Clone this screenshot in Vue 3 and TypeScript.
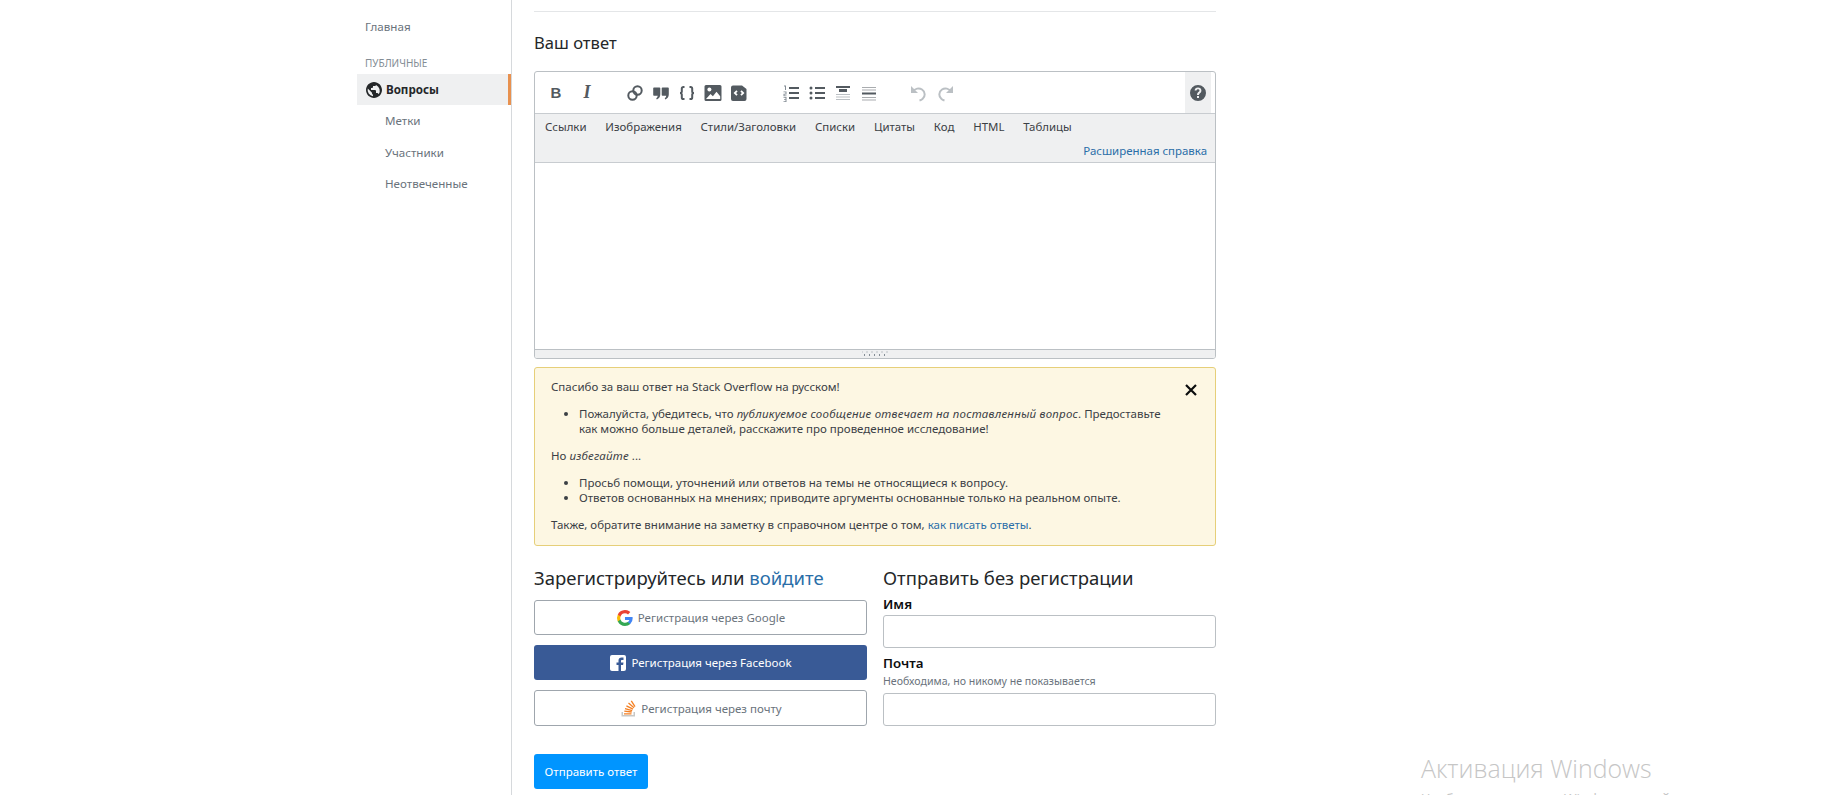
<script setup lang="ts">
const tabs: string[] = ['Ссылки', 'Изображения', 'Стили/Заголовки', 'Списки', 'Цитаты', 'Код', 'HTML', 'Таблицы']
const navItems: string[] = ['Метки', 'Участники', 'Неотвеченные']
</script>

<template>
  <div class="page">
    <aside class="sidebar">
      <div class="home">Главная</div>
      <div class="section">ПУБЛИЧНЫЕ</div>
      <div class="active">
        <svg class="globe" width="18" height="18" viewBox="0 0 18 18"><path fill="#242729" d="M9 1C4.64 1 1 4.64 1 9c0 4.36 3.64 8 8 8 4.36 0 8-3.64 8-8 0-4.36-3.64-8-8-8ZM8 15.32a6.46 6.46 0 0 1-4.3-2.74 6.46 6.46 0 0 1-.93-5.01L7 11.68v.8c0 .44.56 1.13 1 1.22v1.62Zm5.72-2c-.2-.66-1-1.32-1.72-1.32h-1v-2c0-.44-.56-1-1-1H6V7h1c.44 0 1-.56 1-1V5h2c.55 0 .95-.34 1-.9v-.16a6.49 6.49 0 0 1 2.72 9.38Z"/></svg>
        <span>Вопросы</span>
      </div>
      <div v-for="item in navItems" :key="item" class="nav-item">{{ item }}</div>
    </aside>

    <main class="main">
      <hr class="rule" />
      <h2 class="answer-title">Ваш ответ</h2>

      <div class="editor">
        <div class="toolbar">
          <div class="group">
            <span class="tool tool-b">B</span>
            <span class="tool tool-i">I</span>
          </div>
          <div class="group g2">
            <span class="tool">
              <svg width="18" height="18" viewBox="0 0 18 18" fill="none" stroke="#535a60" stroke-width="2"><circle cx="6.500" cy="11.500" r="4.200"/><circle cx="11.500" cy="6.500" r="4.200"/></svg>
            </span>
            <span class="tool">
              <svg width="18" height="18" viewBox="0 0 18 18" fill="#535a60"><path d="M2 3.500h5.500c.5 0 .8.300.8.800v6c0 2.500-1.200 4.200-3.400 5.200l-.7-1.100c.9-.6 1.400-1.400 1.500-2.600H2c-.5 0-.8-.3-.8-.8V4.300c0-.5.300-.8.800-.8zM10.500 3.500H16c.5 0 .8.300.8.800v6c0 2.500-1.200 4.200-3.400 5.200l-.7-1.100c.9-.6 1.400-1.400 1.500-2.600h-3.700c-.5 0-.8-.3-.8-.8V4.300c0-.5.300-.8.800-.8z"/></svg>
            </span>
            <span class="tool">
              <svg width="18" height="18" viewBox="0 0 18 18" fill="none" stroke="#535a60" stroke-width="2"><path d="M6.500 3H5.500C4.300 3 3.800 3.600 3.800 4.600v2.900c0 .9-.6 1.500-1.800 1.500 1.200 0 1.800.6 1.800 1.500v2.900c0 1 .5 1.600 1.700 1.600h1M11.500 3h1c1.200 0 1.700.6 1.700 1.600v2.900c0 .9.6 1.500 1.800 1.500-1.200 0-1.800.6-1.800 1.500v2.900c0 1-.5 1.600-1.700 1.600h-1"/></svg>
            </span>
            <span class="tool">
              <svg width="18" height="18" viewBox="0 0 18 18"><path fill="#535a60" d="M2 1h14a1.500 1.500 0 0 1 1.500 1.500v13A1.500 1.500 0 0 1 16 17H2a1.500 1.500 0 0 1-1.500-1.500v-13A1.500 1.500 0 0 1 2 1z"/><circle cx="5.400" cy="5.600" r="2" fill="#fff"/><path fill="#fff" d="M2 15l4.500-5 2.400 2.300 3.600-4.600 3.700 4.600V15z"/></svg>
            </span>
            <span class="tool">
              <svg width="18" height="18" viewBox="0 0 18 18"><path fill="#535a60" d="M3 1.500h9L16.500 5v10a2 2 0 0 1-2 2H3a2 2 0 0 1-2-2V3.500a2 2 0 0 1 2-2z"/><path fill="none" stroke="#fff" stroke-width="1.800" d="M7 6.800 4.800 9 7 11.200M11 6.800 13.200 9 11 11.200"/></svg>
            </span>
          </div>
          <div class="group g3">
            <span class="tool">
              <svg width="18" height="18" viewBox="0 0 18 18"><path fill="#535a60" d="M7 3h10v2H7zM7 8h10v2H7zM7 13h10v2H7z"/><path fill="#848d95" d="M2 1.500h2V6H3V2.500H2zM1.500 7.500h3v3h-2v1h2v.8h-3v-2.600h2v-1.400h-2zM1.500 13h3v5h-3v-.8h2V16h-1.500v-.8h1.500v-1.400h-2z"/></svg>
            </span>
            <span class="tool">
              <svg width="18" height="18" viewBox="0 0 18 18"><path fill="#535a60" d="M7 3h10v2H7zM7 8h10v2H7zM7 13h10v2H7z"/><circle cx="3" cy="4" r="1.500" fill="#535a60"/><circle cx="3" cy="9" r="1.500" fill="#535a60"/><circle cx="3" cy="14" r="1.500" fill="#535a60"/></svg>
            </span>
            <span class="tool">
              <svg width="18" height="18" viewBox="0 0 18 18"><path fill="#535a60" d="M2 2h14v2H2zM5 5h8v3H5z"/><path fill="#bbc0c4" d="M2 10h14v1H2zM2 12.500h14v1H2zM2 15h14v1H2z"/></svg>
            </span>
            <span class="tool">
              <svg width="18" height="18" viewBox="0 0 18 18"><path fill="#a9acaf" d="M2 3h14v1H2zM2 5.500h14v1H2zM2 13h14v1H2zM2 15.500h14v1H2z"/><path fill="#535a60" d="M2 8.500h14v2H2z"/></svg>
            </span>
          </div>
          <div class="group g4">
            <span class="tool">
              <svg width="18" height="18" viewBox="0 0 18 18" fill="none" stroke="#bbc0c4" stroke-width="2"><path d="M3 7.500C5 4.500 9 3.500 12 5.500c3.500 2.300 3.500 7 .5 9.500-1 .8-2 1.200-3 1.500"/><path fill="#bbc0c4" stroke="none" d="M1 2v7h7z"/></svg>
            </span>
            <span class="tool">
              <svg width="18" height="18" viewBox="0 0 18 18" fill="none" stroke="#bbc0c4" stroke-width="2"><path d="M15 7.500C13 4.500 9 3.500 6 5.500c-3.500 2.300-3.500 7-.5 9.500 1 .8 2 1.200 3 1.500"/><path fill="#bbc0c4" stroke="none" d="M17 2v7h-7z"/></svg>
            </span>
          </div>
          <div class="help-cell">
            <svg width="18" height="18" viewBox="0 0 18 18"><path fill="#535a60" d="M9 1a8 8 0 1 0 0 16A8 8 0 0 0 9 1zm1 13H8v-2h2v2zm1.600-5.200c-.9.900-1.500 1.200-1.600 2.200H8c0-1.800.9-2.500 1.700-3.200.5-.4.800-.8.800-1.300A1.500 1.500 0 0 0 9 5.200c-.8 0-1.400.6-1.500 1.300H5.600A3.400 3.400 0 0 1 9 3.400c2 0 3.400 1.300 3.400 3 0 1-.3 1.700-.8 2.400z"/></svg>
          </div>
        </div>
        <div class="help-row">
          <div class="tabs">
            <span v-for="tab in tabs" :key="tab">{{ tab }}</span>
          </div>
          <a class="adv">Расширенная справка</a>
        </div>
        <div class="textarea"></div>
        <div class="grip"><span class="dots"></span></div>
      </div>

      <div class="notice">
        <svg class="close" width="14" height="14" viewBox="0 0 14 14"><path fill="none" stroke="#0c0d0e" stroke-width="2.200" d="M2 2l10 10M12 2 2 12"/></svg>
        <p>Спасибо за ваш ответ на Stack Overflow на русском!</p>
        <ul>
          <li>Пожалуйста, убедитесь, что <em>публикуемое сообщение отвечает на поставленный вопрос</em>. Предоставьте как можно больше деталей, расскажите про проведенное исследование!</li>
        </ul>
        <p>Но <em>избегайте</em> ...</p>
        <ul>
          <li>Просьб помощи, уточнений или ответов на темы не относящиеся к вопросу.</li>
          <li>Ответов основанных на мнениях; приводите аргументы основанные только на реальном опыте.</li>
        </ul>
        <p>Также, обратите внимание на заметку в справочном центре о том, <a>как писать ответы</a>.</p>
      </div>

      <div class="signup">
        <section class="col">
          <h3>Зарегистрируйтесь или <a>войдите</a></h3>
          <div class="btn btn-line">
            <svg width="18" height="18" viewBox="0 0 18 18"><path d="M16.510 8H8.980v3h4.300c-.18 1-.74 1.480-1.600 2.040v2.010h2.600a7.800 7.800 0 0 0 2.380-5.880c0-.57-.05-.66-.15-1.180z" fill="#4285F4"/><path d="M8.980 17c2.160 0 3.970-.72 5.300-1.940l-2.600-2a4.800 4.800 0 0 1-7.180-2.540H1.830v2.070A8 8 0 0 0 8.980 17z" fill="#34A853"/><path d="M4.500 10.520a4.800 4.800 0 0 1 0-3.040V5.410H1.830a8 8 0 0 0 0 7.180l2.670-2.070z" fill="#FBBC05"/><path d="M8.980 4.180c1.170 0 2.230.4 3.060 1.200l2.300-2.300A8 8 0 0 0 1.830 5.400L4.500 7.490a4.770 4.770 0 0 1 4.480-3.310z" fill="#EA4335"/></svg>
            <span>Регистрация через Google</span>
          </div>
          <div class="btn btn-fb">
            <svg width="18" height="18" viewBox="0 0 18 18"><path fill="#fff" d="M3 1a2 2 0 0 0-2 2v12c0 1.100.9 2 2 2h6.500v-6H7.500V8.500h2v-2c0-2 1.200-3 3-3h2V6H13c-.8 0-1 .4-1 1v1.500h2.500L14.100 11H12v6h3a2 2 0 0 0 2-2V3a2 2 0 0 0-2-2H3z"/></svg>
            <span>Регистрация через Facebook</span>
          </div>
          <div class="btn btn-line btn-mail">
            <svg width="18" height="18" viewBox="0 0 18 18"><path fill="#c8c8c6" d="M14.500 16v-3H16v4.500H2.500V13H4v3z"/><path fill="none" stroke="#f48024" stroke-width="1.300" d="M5 14.800h7.500M5.300 12.200l7.400.8M6 9.600l7.200 2M7.400 6.800l6.600 3.400M9.500 4.100l5.500 4.600M12.300 1.800l3.700 5.800"/></svg>
            <span>Регистрация через почту</span>
          </div>
        </section>
        <section class="col">
          <h3>Отправить без регистрации</h3>
          <label class="field-label first">Имя</label>
          <div class="input"></div>
          <label class="field-label second">Почта</label>
          <div class="hint">Необходима, но никому не показывается</div>
          <div class="input after-hint"></div>
        </section>
      </div>

      <div class="submit">Отправить ответ</div>
    </main>

    <div class="watermark">
      <div class="wm-title">Активация Windows</div>
      <div class="wm-sub">Чтобы активировать Windows, перейдите в</div>
    </div>
  </div>
</template>

<style scoped>
.page {
  position: relative;
  display: flex;
  height: 795px;
  overflow: hidden;
  padding-left: 357px;
  box-sizing: border-box;
  background: #fff;
  font-family: "Noto Sans", "Open Sans", sans-serif;
  color: #242729;
}
.sidebar {
  width: 155px;
  flex: none;
  box-sizing: border-box;
  border-right: 1px solid #d6d9dc;
  font-size: 11.600px;
  color: #6a737c;
}
.home {
  padding: 19px 0 0 8px;
  line-height: 16px;
}
.section {
  margin-top: 22px;
  padding-left: 8px;
  font-size: 10px;
  line-height: 13px;
  color: #848d95;
}
.active {
  display: flex;
  align-items: center;
  gap: 3px;
  height: 31px;
  margin-top: 4px;
  padding-left: 8px;
  background: #eff0f1;
  border-right: 3px solid #e8914f;
  font-weight: 700;
  color: #242729;
}
.globe {
  flex: none;
}
.nav-item {
  padding-left: 28px;
  line-height: 16px;
  margin-top: 15.500px;
}
.active + .nav-item {
  margin-top: 8px;
}
.main {
  width: 682px;
  margin-left: 22px;
  flex: none;
}
.rule {
  margin: 11px 0 0;
  border: 0;
  border-top: 1px solid #e4e6e8;
}
.answer-title {
  margin: 20px 0 0;
  font-size: 16.600px;
  line-height: 22px;
  font-weight: 400;
}
.editor {
  margin-top: 17px;
  border: 1px solid #bbc0c4;
  border-radius: 3px;
  overflow: hidden;
}
.toolbar {
  display: flex;
  height: 41px;
  padding-left: 8px;
  border-bottom: 1px solid #c8ccd0;
  align-items: center;
}
.group {
  display: flex;
}
.group:first-child {
  gap: 5px;
}
.g2 {
  margin-left: 22px;
}
.g3 {
  margin-left: 26px;
}
.g4 {
  margin-left: 24px;
}
.tool {
  display: flex;
  width: 26px;
  height: 18px;
  align-items: center;
  justify-content: center;
}
.tool-b {
  font: 700 15px "Liberation Sans", sans-serif;
  color: #535a60;
}
.tool-i {
  font: italic 700 18px "Liberation Serif", serif;
  color: #535a60;
}
.help-cell {
  display: flex;
  align-self: stretch;
  width: 26px;
  margin: 0 4px 0 auto;
  align-items: center;
  justify-content: center;
  background: #eff0f1;
}
.help-row {
  height: 49px;
  background: #eff0f1;
  border-bottom: 1px solid #c8ccd0;
  box-sizing: border-box;
  padding: 5px 8px 0 10px;
  font-size: 11.440px;
}
.tabs {
  display: flex;
  gap: 18.800px;
  line-height: 16px;
  color: #3b4045;
}
.adv {
  display: block;
  margin-top: 8px;
  text-align: right;
  line-height: 16px;
  color: #2a6ea8;
}
.textarea {
  height: 186px;
  background: #fff;
}
.grip {
  display: flex;
  height: 8px;
  justify-content: center;
  align-items: center;
  background: #eff0f1;
  border-top: 1px solid #bbc0c4;
}
.dots {
  width: 26px;
  height: 6px;
  background-image:
    radial-gradient(circle, #848d95 0.7px, transparent 1px),
    radial-gradient(circle, #bbc0c4 0.7px, transparent 1px);
  background-size: 5px 6px;
  background-position: 0 1px, 2.500px -2px;
}
.notice {
  position: relative;
  margin-top: 8px;
  box-sizing: border-box;
  height: 179px;
  padding: 11px 16px 0;
  background: #fdf7e3;
  border: 1px solid #e6cf79;
  border-radius: 3px;
  font-size: 11.500px;
  line-height: 15px;
  color: #3b4045;
}
.notice p {
  margin: 0;
}
.notice ul {
  margin: 12px 0;
  padding: 0 30px 0 28px;
}
.notice em {
  letter-spacing: 0.22px;
}
.notice a {
  color: #2a6ea8;
}
.close {
  position: absolute;
  top: 15px;
  right: 17px;
}
.signup {
  display: grid;
  grid-template-columns: 333px 333px;
  column-gap: 16px;
  margin-top: 19px;
}
.col h3 {
  margin: 0;
  height: 35px;
  font-size: 18.500px;
  line-height: 25px;
  font-weight: 400;
}
.col h3 a {
  color: #2a6ea8;
}
.btn {
  display: flex;
  box-sizing: border-box;
  height: 35px;
  margin-bottom: 10px;
  align-items: center;
  justify-content: center;
  gap: 4px;
  border-radius: 3px;
  font-size: 11.500px;
}
.btn-mail {
  height: 36px;
}
.btn-line {
  border: 1px solid #9fa6ad;
  color: #6a737c;
}
.btn-fb {
  background: #395a96;
  color: #fff;
}
.field-label {
  display: block;
  font-size: 13.300px;
  font-weight: 600;
  line-height: 16px;
  color: #0c0d0e;
}
.field-label.first {
  margin-top: -4px;
}
.field-label.second {
  margin-top: 7px;
}
.input {
  box-sizing: border-box;
  height: 33px;
  margin-top: 3px;
  border: 1px solid #bbc0c4;
  border-radius: 3px;
}
.input.after-hint {
  margin-top: 5px;
}
.hint {
  margin-top: 3px;
  font-size: 10.600px;
  line-height: 14px;
  color: #6a737c;
}
.submit {
  display: flex;
  box-sizing: border-box;
  width: 114px;
  height: 35px;
  margin-top: 18px;
  align-items: center;
  justify-content: center;
  background: #0095ff;
  border-radius: 3px;
  color: #fff;
  font-size: 11.500px;
}
.watermark {
  position: absolute;
  left: 1421px;
  top: 752px;
  color: #c6c6c6;
  white-space: nowrap;
}
.wm-title {
  font-family: "Open Sans", sans-serif;
  font-size: 24.900px;
  line-height: 32px;
  font-weight: 300;
}
.wm-sub {
  margin-top: 6px;
  font-family: "Open Sans", sans-serif;
  font-size: 13.700px;
  line-height: 18px;
}
</style>
